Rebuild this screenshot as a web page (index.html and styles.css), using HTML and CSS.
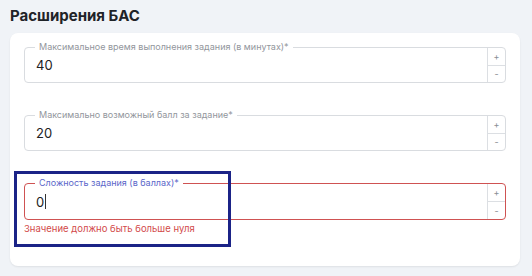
FILE: index.html
```html
<!DOCTYPE html>
<html lang="ru">
<head>
<meta charset="utf-8">
<link rel="stylesheet" href="styles.css">
</head>
<body>
<div class="page">
  <h1 class="title">Расширения БАС</h1>
  <div class="card">
    <div class="field">
      <span class="label">Максимальное время выполнения задания (в минутах)*</span>
      <div class="value">40</div>
      <div class="spin"><span>+</span><span>-</span></div>
    </div>
    <div class="field">
      <span class="label">Максимально возможный балл за задание*</span>
      <div class="value">20</div>
      <div class="spin"><span>+</span><span>-</span></div>
    </div>
    <div class="group">
      <div class="field error">
        <span class="label">Сложность задания (в баллах)*</span>
        <div class="value">0<i class="caret"></i></div>
        <div class="spin"><span>+</span><span>-</span></div>
      </div>
      <div class="err-text">Значение должно быть больше нуля</div>
      <div class="highlight"></div>
    </div>
  </div>
</div>
</body>
</html>
```
FILE: styles.css
```css
* { box-sizing: border-box; }
html, body { margin: 0; padding: 0; }
body {
  background: #f0f3f7;
  font-family: Inter, "Noto Sans", sans-serif;
  width: 532px;
  height: 276px;
  overflow: hidden;
}
.page { padding: 0 12px 0 10px; }
.title {
  margin: 0;
  height: 33px;
  padding-top: 7px;
  font-size: 15px;
  line-height: 18px;
  font-weight: 700;
  color: #1f2328;
}
.card {
  background: #fff;
  border-radius: 8px;
  box-shadow: 0 1px 2px rgba(0,0,0,0.08);
  padding: 14px 14px 31px 14px;
  display: flex;
  flex-direction: column;
  gap: 32px;
  height: 233px;
}
.field {
  position: relative;
  height: 37px;
  border: 1px solid #d9dce0;
  border-radius: 4px;
  display: flex;
}
.label {
  position: absolute;
  top: -7px;
  left: 10px;
  padding: 0 4px;
  background: #fff;
  font-size: 9px;
  line-height: 12px;
  color: #92969c;
  white-space: nowrap;
}
.value {
  flex: 1;
  display: flex;
  align-items: center;
  padding-left: 11px;
  font-size: 13px;
  color: #222;
}
.caret {
  display: inline-block;
  width: 1px;
  height: 15px;
  background: #333;
  margin-left: 1px;
}
.spin {
  width: 18px;
  border-left: 1px solid #dcdfe3;
  display: flex;
  flex-direction: column;
}
.spin span {
  flex: 1;
  display: flex;
  align-items: center;
  justify-content: center;
  font-size: 9px;
  color: #8a8e94;
}
.spin span + span { border-top: 1px solid #dcdfe3; }
.group { position: relative; }
.field.error { border-color: #cf5252; }
.field.error .label { color: #5b67c9; }
.err-text {
  margin-top: 3px;
  font-size: 9.5px;
  line-height: 12px;
  color: #d24a4a;
}
.highlight {
  position: absolute;
  left: -10px;
  top: -12px;
  width: 217px;
  height: 76px;
  border: 3px solid #1b2387;
}
```
